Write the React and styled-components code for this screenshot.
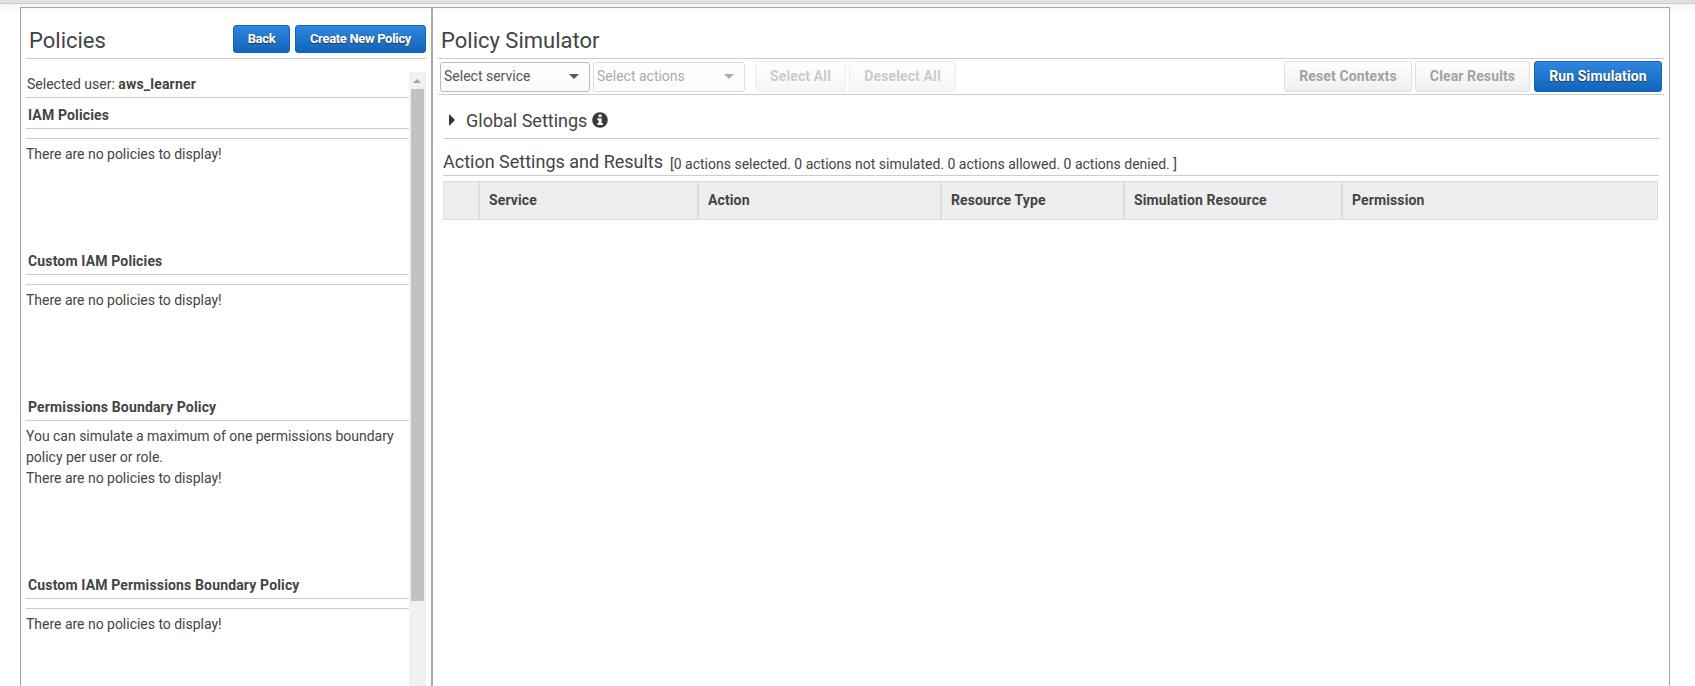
import React from 'react'
import styled, { createGlobalStyle, css } from 'styled-components'

const GlobalStyle = createGlobalStyle`
  * {
    box-sizing: border-box;
  }

  body {
    margin: 0;
    background: #fff;
    color: #444;
    font-family: Roboto, "Liberation Sans", sans-serif;
    font-size: 14px;
    line-height: 21px;
    overflow: hidden;
  }
`

const Page = styled.div`
  height: 686px;
  display: flex;
  flex-direction: column;
  overflow: hidden;
`

const TopBar = styled.div`
  height: 4px;
  flex: none;
  background: #e0e0e0;
  border-bottom: 1px solid #ccc;
  box-shadow: 0 1px 12px rgba(0, 0, 0, 0.15);
`

const Frame = styled.div`
  flex: 1;
  min-height: 0;
  display: flex;
  margin: 3px 25px 0 20px;
  border: 1px solid #a5a5a5;
  border-bottom: 0;
`

const Sidebar = styled.div`
  width: 412px;
  flex: none;
  display: flex;
  flex-direction: column;
  padding: 0 5px;
  border-right: 2px solid #a9a9a9;
`

const Main = styled.div`
  flex: 1;
  min-width: 0;
  padding: 0 5px;
`

const PanelHeader = styled.div`
  height: 51px;
  flex: none;
  display: flex;
  gap: 5px;
  padding-top: 17px;
  border-bottom: 1px solid #ccc;
`

const Title = styled.h1`
  flex: 1;
  margin: 0;
  padding: 2px 0 0 3px;
  font-size: 22px;
  font-weight: 400;
  line-height: 28px;
`

const Button = styled.button`
  height: ${({ $small }) => ($small ? 28 : 31)}px;
  width: ${({ $width }) => $width}px;
  flex: none;
  padding: 0 0 1px;
  border: 1px solid #ddd;
  border-radius: 3px;
  background: linear-gradient(#fff, #eee);
  color: #444;
  font-family: inherit;
  font-size: ${({ $small }) => ($small ? 13 : 14)}px;
  font-weight: 700;
  letter-spacing: ${({ $small }) => ($small ? -0.32 : 0.12)}px;
  white-space: nowrap;

  ${({ $primary }) => $primary && css`
    border-color: #1166bb;
    background: linear-gradient(#2f86de, #1166bb);
    color: #fff;
    text-shadow: 0 1px 1px #333;
  `}

  &:disabled {
    color: #999;
    opacity: ${({ $faded }) => ($faded ? 0.5 : 0.9)};
  }
`

const ScrollArea = styled.div`
  flex: 1;
  min-height: 0;
  display: flex;
  margin-top: 13px;
`

const PolicyList = styled.div`
  flex: 1;
  min-width: 0;
  overflow: hidden;
`

const ScrollBar = styled.div`
  width: 17px;
  flex: none;
  display: flex;
  flex-direction: column;
  padding-left: 2px;
  background: #f1f1f1;
`

const ScrollArrow = styled.div`
  width: 8px;
  margin: 7px 0 6px 2px;
  border: 4px solid transparent;
  border-top: 0;
  border-bottom-color: #a3a3a3;
`

const ScrollThumb = styled.div`
  width: 13px;
  height: 512px;
  background: #c1c1c1;
`

const SelectedUser = styled.div`
  height: 26px;
  padding: 2px 0 0 1px;
  border-bottom: 1px solid #ccc;

  b {
    letter-spacing: 0.2px;
  }
`

const PolicyGroup = styled.div`
  height: ${({ $tall }) => ($tall ? 178 : 146)}px;
`

const GroupTitle = styled.h2`
  height: 31px;
  margin: 0;
  padding: 7px 0 0 2px;
  border-bottom: 1px solid #ccc;
  font-size: 14px;
  font-weight: 700;
  line-height: 21px;
  letter-spacing: 0.15px;
`

const GroupBody = styled.div`
  margin-top: ${({ $ruled }) => ($ruled ? 9 : 0)}px;
  padding-top: 5px;
  border-top: ${({ $ruled }) => ($ruled ? '1px solid #ccc' : '0')};
  letter-spacing: -0.02px;
`

const Toolbar = styled.div`
  height: 36px;
  display: flex;
  align-items: flex-start;
  gap: 3px;
  padding: 2px 2px 0;
  border-bottom: 1px solid #ccc;
`

const Select = styled.div`
  width: ${({ $width }) => $width}px;
  height: 30px;
  display: flex;
  align-items: center;
  justify-content: space-between;
  margin-top: 1px;
  padding: 0 10px 2px 3px;
  border: 1px solid #bbb;
  border-radius: 3px;
  background: linear-gradient(#fff, #fafafa);
  color: #555;
  opacity: ${({ $disabled }) => ($disabled ? 0.5 : 1)};
`

const Caret = styled.span`
  border: 5px solid transparent;
  border-top-color: #555;
  border-bottom: 0;
`

const ButtonGroup = styled.div`
  display: flex;
  gap: 3px;
  margin: ${({ $right }) => ($right ? '0 1px 0 auto' : '0 0 0 7px')};
`

const Content = styled.div`
  padding: 0 5px;
`

const GlobalSettings = styled.div`
  height: 44px;
  display: flex;
  align-items: center;
  padding: 7px 0 0 6px;
  border-bottom: 1px solid #ccc;
  font-size: 18px;

  svg {
    margin-left: 5px;
  }
`

const Expander = styled.span`
  margin-right: 11px;
  border: 6px solid transparent;
  border-left-color: #333;
  border-right: 0;
`

const ResultsHeader = styled.div`
  height: 37px;
  display: flex;
  align-items: flex-start;
  gap: 7px;
  padding-top: 12px;
  border-bottom: 1px solid #ccc;
`

const ResultsTitle = styled.h2`
  margin: 0;
  font-size: 18px;
  font-weight: 400;
  line-height: 22px;
`

const ResultsSummary = styled.span`
  padding-top: 3px;
`

const ResultsTable = styled.div`
  display: grid;
  grid-template-columns: 34px 219px 243px 183px 218px 1fr;
  height: 39px;
  margin: 5px 1px 0 0;
  border: 1px solid #ddd;
  background: #eee;
`

const HeaderCell = styled.div`
  padding: 8px 0 0 9px;
  font-weight: 700;
  letter-spacing: 0.12px;

  & + & {
    border-left: 2px solid #ddd;
  }
`

const InfoIcon = () => (
  <svg width="16" height="16" viewBox="0 0 16 16">
    <circle cx="8" cy="8" r="7.8" fill="#3a3a3a" />
    <path fill="#fff" d="M6.6 2.6h3v2.4h-3zM5.4 6.2h4.2v4.9h1.2v2H5.4v-2h1.2V8.2H5.4z" />
  </svg>
)

const policyGroups = [
  { title: 'IAM Policies' },
  { title: 'Custom IAM Policies' },
  {
    title: 'Permissions Boundary Policy',
    note: 'You can simulate a maximum of one permissions boundary policy per user or role.'
  },
  { title: 'Custom IAM Permissions Boundary Policy' }
]

const columns = ['', 'Service', 'Action', 'Resource Type', 'Simulation Resource', 'Permission']

const PoliciesPanel = () => {
  return (
    <Sidebar>
      <PanelHeader>
        <Title>Policies</Title>
        <Button $primary $small $width={57}>Back</Button>
        <Button $primary $small $width={131}>Create New Policy</Button>
      </PanelHeader>
      <ScrollArea>
        <PolicyList>
          <SelectedUser>Selected user: <b>aws_learner</b></SelectedUser>
          {policyGroups.map(({ title, note }) => (
            <PolicyGroup key={title} $tall={!!note}>
              <GroupTitle>{title}</GroupTitle>
              <GroupBody $ruled={!note}>
                {note && <div>{note}</div>}
                There are no policies to display!
              </GroupBody>
            </PolicyGroup>
          ))}
        </PolicyList>
        <ScrollBar>
          <ScrollArrow />
          <ScrollThumb />
        </ScrollBar>
      </ScrollArea>
    </Sidebar>
  )
}

const SimulatorPanel = () => {
  return (
    <Main>
      <PanelHeader>
        <Title>Policy Simulator</Title>
      </PanelHeader>
      <Toolbar>
        <Select $width={150}>Select service<Caret /></Select>
        <Select $width={152} $disabled>Select actions<Caret /></Select>
        <ButtonGroup>
          <Button $width={91} $faded disabled>Select All</Button>
          <Button $width={107} $faded disabled>Deselect All</Button>
        </ButtonGroup>
        <ButtonGroup $right>
          <Button $width={128} disabled>Reset Contexts</Button>
          <Button $width={115} disabled>Clear Results</Button>
        </ButtonGroup>
        <Button $primary $width={128}>Run Simulation</Button>
      </Toolbar>
      <Content>
        <GlobalSettings>
          <Expander />
          Global Settings
          <InfoIcon />
        </GlobalSettings>
        <ResultsHeader>
          <ResultsTitle>Action Settings and Results</ResultsTitle>
          <ResultsSummary>
            [0 actions selected. 0 actions not simulated. 0 actions allowed. 0 actions denied. ]
          </ResultsSummary>
        </ResultsHeader>
        <ResultsTable>
          {columns.map((name) => (
            <HeaderCell key={name}>{name}</HeaderCell>
          ))}
        </ResultsTable>
      </Content>
    </Main>
  )
}

const App = () => {
  return (
    <Page>
      <GlobalStyle />
      <TopBar />
      <Frame>
        <PoliciesPanel />
        <SimulatorPanel />
      </Frame>
    </Page>
  )
}

export default App
